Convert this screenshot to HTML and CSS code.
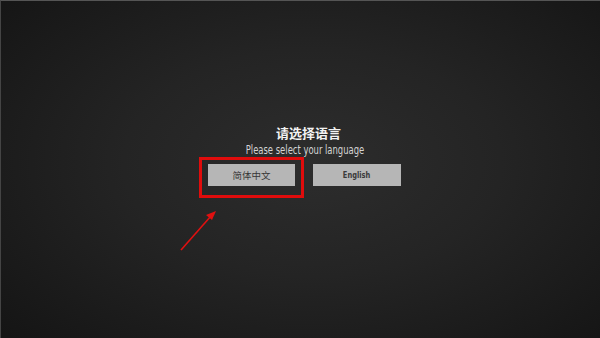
FILE: index.html
```html
<!DOCTYPE html>
<html lang="zh-CN">
<head>
  <meta charset="UTF-8">
  <meta name="viewport" content="width=device-width, initial-scale=1.0">
  <title>请选择语言</title>
  <link rel="stylesheet" href="styles.css">
</head>
<body>
  <div class="screen">
    <!-- Pilihan bahasa -->
    <div class="lang-box">
      <h1 class="lang-title">请选择语言</h1>
      <p class="lang-sub"><span class="narrow">Please select your language</span></p>
      <div class="lang-buttons">
        <button class="lang-btn">简体中文</button>
        <button class="lang-btn lang-btn-en"><span class="narrow">English</span></button>
      </div>
    </div>

    <!-- anotasi merah -->
    <div class="mark-box"></div>
    <svg class="mark-arrow" width="60" height="60" viewBox="0 0 60 60">
      <line x1="4" y1="53" x2="34" y2="19" stroke="#e01010" stroke-width="1.6"/>
      <polygon points="39,14 29,18 35,23" fill="#e01010"/>
    </svg>
  </div>
</body>
</html>
```

FILE: styles.css
```css
html, body {
  margin: 0;
  padding: 0;
}

body {
  width: 600px;
  height: 338px;
  overflow: hidden;
  background: #181818;
}

.screen {
  position: relative;
  box-sizing: border-box;
  width: 600px;
  height: 338px;
  border-top: 1px solid #555;
  border-left: 1px solid #444;
  background: radial-gradient(ellipse 70% 75% at 52% 48%, #2d2d2d 0%, #242424 45%, #151515 100%);
  padding-top: 124px;
  padding-left: 8px;
}

.lang-box {
  display: flex;
  flex-direction: column;
  align-items: center;
}

.lang-title {
  margin: 0;
  padding-left: 8px;
  font-family: "Noto Sans CJK SC", sans-serif;
  font-size: 13px;
  font-weight: bold;
  line-height: 16px;
  color: #f2f2f2;
}

.lang-sub {
  margin: 2px 0 0;
  font-family: "DejaVu Sans Condensed", "DejaVu Sans", sans-serif;
  font-size: 12px;
  line-height: 14px;
  color: #d4d4d4;
}

/* font sempit seperti di layar asli */
.narrow {
  display: inline-block;
  transform: scaleX(0.78);
  white-space: nowrap;
}

.lang-buttons {
  display: flex;
  gap: 18px;
  margin-top: 7px;
}

.lang-btn {
  width: 87px;
  height: 22px;
  padding: 0;
  border: none;
  background: #b6b6b6;
  color: #363636;
  font-family: "Noto Sans CJK SC", sans-serif;
  font-size: 9.5px;
  line-height: 22px;
}

.lang-btn-en {
  width: 88px;
  font-family: "DejaVu Sans Condensed", "DejaVu Sans", sans-serif;
  font-weight: bold;
  font-size: 9.5px;
  color: #3a3a3a;
}

/* kotak merah di atas tombol */
.mark-box {
  position: absolute;
  left: 198px;
  top: 156px;
  width: 105px;
  height: 41px;
  box-sizing: border-box;
  border: 3px solid #e00c0c;
}

.mark-arrow {
  position: absolute;
  left: 176px;
  top: 196px;
}
```
